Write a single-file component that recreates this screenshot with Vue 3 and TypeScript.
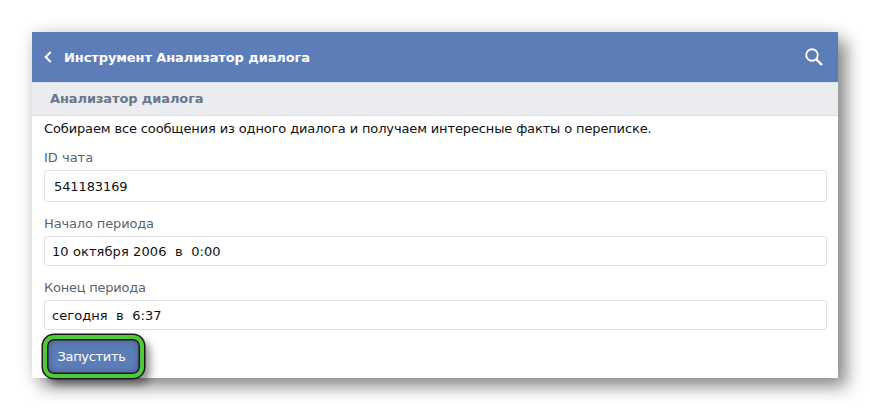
<script setup lang="ts">
interface Field { label: string; value: string; cls: string }
const fields: Field[] = [
  { label: 'ID чата', value: '541183169', cls: 'first' },
  { label: 'Начало периода', value: '10 октября 2006\u00a0 в\u00a0 0:00', cls: 'second' },
  { label: 'Конец периода', value: 'сегодня\u00a0 в\u00a0 6:37', cls: 'third' },
]
</script>

<template>
  <div class="page">
    <div class="card">
      <header class="top">
        <svg class="back" width="8" height="12" viewBox="0 0 8 12"><path d="M6.7 1 L1.7 6 L6.7 11" fill="none" stroke="#fff" stroke-width="2" /></svg>
        <span class="title">Инструмент Анализатор диалога</span>
        <svg class="search" width="18" height="18" viewBox="0 0 18 18"><circle cx="7" cy="7" r="5.8" fill="none" stroke="#fff" stroke-width="1.9" /><path d="M11.3 11.3 L17 17" stroke="#fff" stroke-width="2.4" /></svg>
      </header>
      <div class="sub">Анализатор диалога</div>
      <div class="body">
        <p class="intro">Собираем все сообщения из одного диалога и получаем интересные факты о переписке.</p>
        <div v-for="f in fields" :key="f.label" class="field" :class="f.cls">
          <label class="label">{{ f.label }}</label>
          <div class="input">{{ f.value }}</div>
        </div>
        <button class="run" type="button">Запустить</button>
      </div>
    </div>
  </div>
</template>

<style scoped>
.page { width: 870px; height: 410px; padding: 32px 32px 0; box-sizing: border-box; background: #fff; font-family: "DejaVu Sans", Verdana, sans-serif; overflow: hidden; }
.card { width: 806px; height: 346px; background: #fff; box-shadow: 9px 9px 16px rgba(0,0,0,.42), 0 0 16px rgba(0,0,0,.12); }
.top { height: 50px; background: #5d7db8; display: flex; align-items: center; padding: 0 15px 0 12px; color: #fff; }
.back { margin-right: 12px; }
.title { font-size: 13px; font-weight: 700; flex: 1; letter-spacing: -0.1px; }
.sub { height: 34px; box-sizing: border-box; background: #ebecf0; border-top: 1px solid #e0e1e6; border-bottom: 1px solid #dcdee4; padding-left: 18px; line-height: 32px; font-size: 13px; font-weight: 700; color: #69778d; letter-spacing: -0.11px; }
.body { padding: 0 11px 0 12px; }
.intro { margin: 0; font-size: 13px; line-height: 26px; color: #111; letter-spacing: -0.135px; }
.label { display: block; font-size: 13px; line-height: 18px; color: #5c6470; margin-bottom: 3px; }
.field.first { margin-top: 7px; }
.field.second { margin-top: 13px; }
.field.third { margin-top: 13px; }
.second .label { letter-spacing: -0.14px; }
.third .label { letter-spacing: -0.23px; }
.input { height: 32px; box-sizing: border-box; border: 1px solid #e2e3ea; border-radius: 3px; font-size: 13px; line-height: 32px; color: #111; padding-left: 7px; }
.first .input { padding-left: 9px; letter-spacing: -0.1px; }
.second .input { height: 30px; line-height: 29px; letter-spacing: 0.09px; }
.third .input { height: 30px; line-height: 29px; letter-spacing: 0.06px; }
.run { display: block; margin-top: 5px; margin-left: -1.5px; width: 101px; height: 43px; box-sizing: border-box; background: #5d7db8; color: #fff; font: 13px "DejaVu Sans", Verdana, sans-serif; letter-spacing: -0.33px; border: 4px solid #4fc83a; border-radius: 11px; box-shadow: inset 0 0 0 1.5px #1a1a1a, inset 0 0 7px 1px rgba(0,0,0,.3), 0 0 0 1.5px #1a1a1a, 6px 6px 9px rgba(0,0,0,.45); padding: 0 3px 0 0; }
</style>
